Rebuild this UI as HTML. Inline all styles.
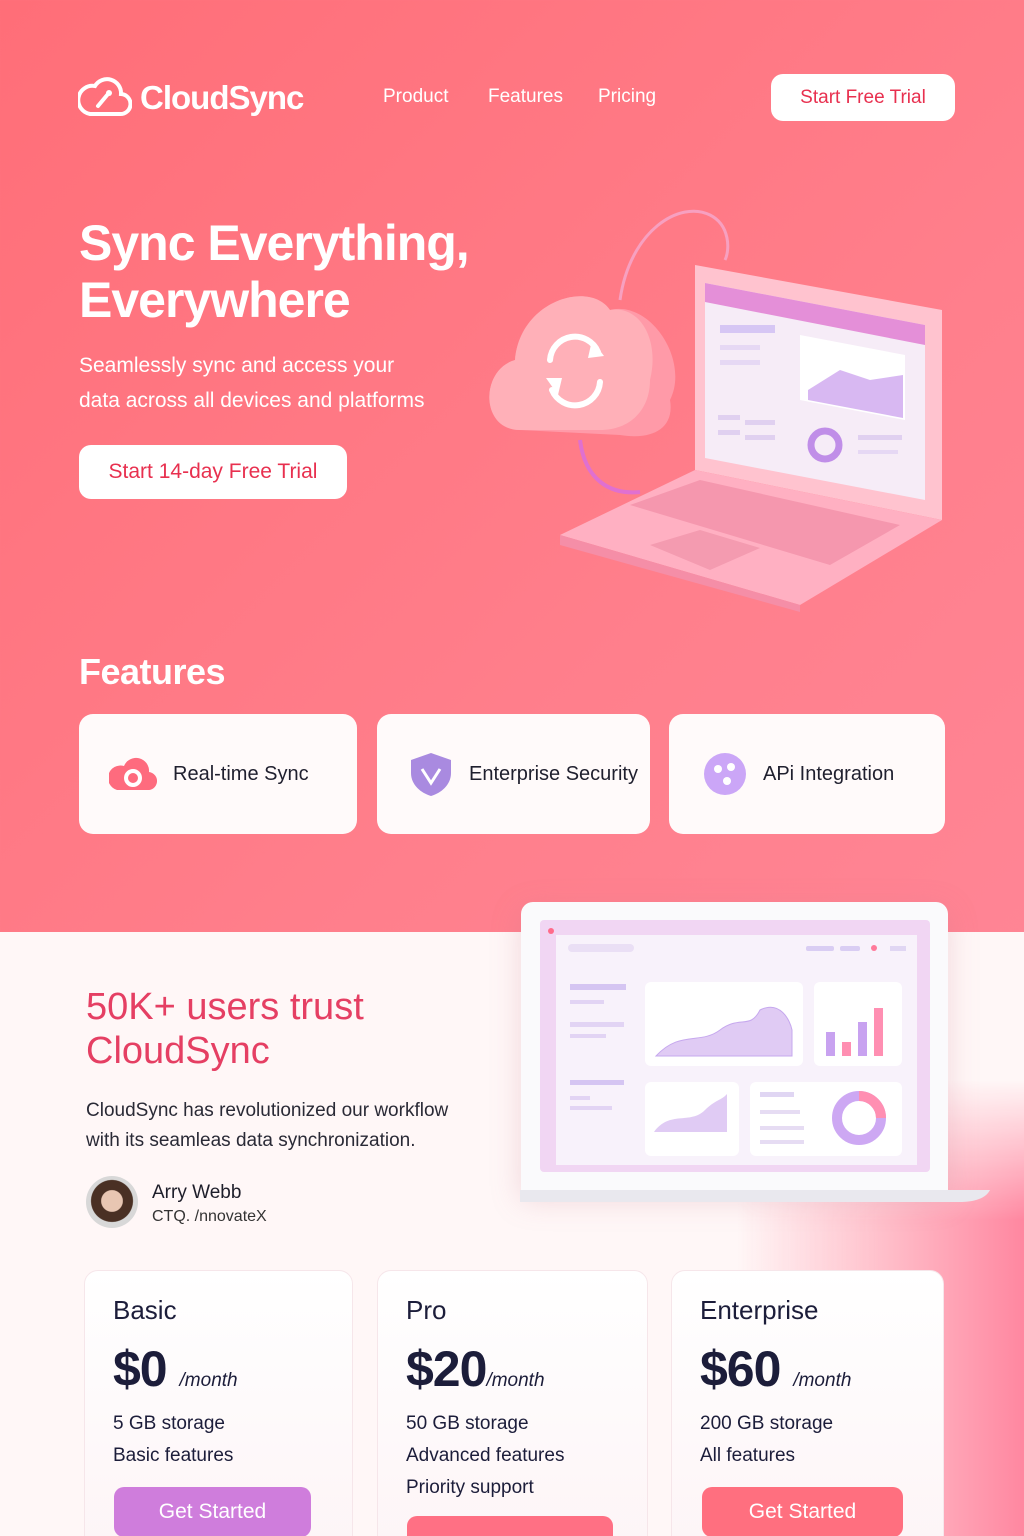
<!DOCTYPE html>
<html><head><meta charset="utf-8"><style>
*{margin:0;padding:0;box-sizing:border-box}
html{width:1024px;height:1536px;overflow:hidden}
body{width:1024px;height:1536px;overflow:hidden;font-family:"Liberation Sans",sans-serif;position:relative;background:linear-gradient(135deg,#ff6e78 0%,#ff7f8c 50%,#ff8a9c 100%)}
.abs{position:absolute}
.nav a{position:absolute;color:#fff;font-size:19px;top:86px}
.btn{position:absolute;background:#fff;border-radius:12px;color:#e8304f;text-align:center}
.card{position:absolute;background:#fffafa;border-radius:14px;top:714px;height:120px;display:flex;align-items:center;font-size:20px;color:#1f1f2e}
.pc{position:absolute;top:1270px;height:300px;background:linear-gradient(#fff,#fdf4f6);border-radius:14px;border:1px solid #f6e6ea;padding:24px 28px;color:#1c1d3a}
.pc h3{font-size:26px;font-weight:normal;margin-bottom:14px}
.pc .p{font-size:50px;font-weight:bold;letter-spacing:-1px}
.pc .p span{font-size:19px;font-weight:normal;font-style:italic;letter-spacing:0}
.pc .f{font-size:19px;line-height:32px;margin-top:10px}
.gs{position:absolute;height:50px;border-radius:10px;color:#fff;font-size:21px;text-align:center;line-height:50px}
</style></head><body>
<div class="abs" style="left:0;top:932px;width:1024px;height:604px;background:#fff7f7"></div>
<div class="abs" style="left:0;top:1080px;width:1024px;height:456px;background:linear-gradient(90deg,rgba(255,247,247,0) 72%,#ffc0cb 86%,#ff87a0 100%);-webkit-mask-image:linear-gradient(to bottom,transparent,#000 140px);mask-image:linear-gradient(to bottom,transparent,#000 140px)"></div>

<svg class="abs" style="left:78px;top:74px" width="54" height="44" viewBox="0 0 54 44"><path d="M14 40 H42 A10 10 0 0 0 43 20 A14 14 0 0 0 17 12 A11 11 0 0 0 12 40 Z" fill="none" stroke="#fff" stroke-width="4"/><path d="M20 32 L30 20" stroke="#fff" stroke-width="4" stroke-linecap="round"/><circle cx="31" cy="19" r="3" fill="#fff"/></svg>
<div class="abs" style="left:140px;top:79px;font-size:33px;color:#fff;font-weight:bold;letter-spacing:-1px">CloudSync</div>
<div class="nav"><a style="left:383px">Product</a><a style="left:488px">Features</a><a style="left:598px">Pricing</a></div>
<div class="btn" style="left:771px;top:74px;width:184px;height:47px;line-height:47px;font-size:19px">Start Free Trial</div>

<div class="abs" style="left:79px;top:215px;font-size:50px;line-height:57px;color:#fff;font-weight:bold;letter-spacing:-1px">Sync Everything,<br>Everywhere</div>
<div class="abs" style="left:79px;top:348px;font-size:21px;line-height:35px;color:#fff">Seamlessly sync and access your<br>data across all devices and platforms</div>
<div class="btn" style="left:79px;top:445px;width:268px;height:54px;line-height:54px;font-size:21px">Start 14-day Free Trial</div>

<svg class="abs" style="left:480px;top:200px" width="480" height="420" viewBox="480 200 480 420">
<path d="M620 300 C630 230 680 200 710 215 C730 225 730 250 725 260" fill="none" stroke="#f7a0c0" stroke-width="3"/>
<path d="M580 440 C585 480 610 495 640 492" fill="none" stroke="#e070d0" stroke-width="4"/>
<polygon points="695,265 942,310 942,520 695,470" fill="#ffc3cf"/>
<polygon points="705,283 925,325 925,500 705,458" fill="#f6ecf7"/>
<polygon points="705,283 925,325 925,345 705,302" fill="#e48fd8"/>
<polygon points="800,335 905,355 905,420 800,400" fill="#fff"/>
<polygon points="808,390 840,370 870,380 903,375 903,418 808,400" fill="#d8b8f2"/>
<circle cx="825" cy="445" r="14" fill="none" stroke="#c08ee8" stroke-width="7"/>
<rect x="720" y="325" width="55" height="8" fill="#d6c6f4"/>
<rect x="720" y="345" width="40" height="5" fill="#e6d8f4"/><rect x="720" y="360" width="40" height="5" fill="#e6d8f4"/>
<rect x="718" y="415" width="22" height="5" fill="#e0d0f0"/><rect x="718" y="430" width="22" height="5" fill="#e0d0f0"/><rect x="745" y="420" width="30" height="5" fill="#e0d0f0"/><rect x="745" y="435" width="30" height="5" fill="#e0d0f0"/>
<rect x="858" y="435" width="44" height="5" fill="#e0d0f0"/><rect x="858" y="450" width="40" height="4" fill="#e6d8f4"/>
<polygon points="560,535 695,470 942,520 800,605" fill="#ffb0c2"/>
<polygon points="560,535 800,605 800,612 560,545" fill="#f58ea7"/>
<polygon points="630,505 700,480 900,525 830,565" fill="#f597ae"/>
<polygon points="650,545 700,530 760,548 710,570" fill="#f49bb0"/>
<path d="M520 430 C480 430 480 370 515 360 C520 300 590 280 610 310 C650 300 690 360 670 400 C675 430 650 440 620 435 Z" fill="#ff9aa8"/>
<path d="M520 430 C480 430 480 370 515 360 C520 300 590 280 610 310 C640 305 660 340 650 380 C650 410 630 430 600 430 Z" fill="#ffb0b8"/>
<path d="M550 360 A25 25 0 0 1 598 352 M600 382 A25 25 0 0 1 552 390" fill="none" stroke="#fff" stroke-width="6" stroke-linecap="round"/>
<polygon points="592,340 604,356 588,358" fill="#fff"/><polygon points="558,395 546,378 562,378" fill="#fff"/>
</svg>

<div class="abs" style="left:79px;top:651px;font-size:36px;font-weight:bold;color:#fff;letter-spacing:-0.5px">Features</div>
<div class="card" style="left:79px;width:278px"><svg style="margin-left:30px" width="48" height="40" viewBox="0 0 48 40"><path d="M8 36 H38 A9 9 0 0 0 40 18 A13 13 0 0 0 15 12 A10 10 0 0 0 8 36Z" fill="#fe6b7e"/><circle cx="24" cy="24" r="7" fill="none" stroke="#fff" stroke-width="4"/></svg><span style="margin-left:16px">Real-time Sync</span></div>
<div class="card" style="left:377px;width:273px"><svg style="margin-left:32px" width="44" height="46" viewBox="0 0 44 46"><path d="M22 2 L42 9 V22 C42 34 32 42 22 45 C12 42 2 34 2 22 V9Z" fill="#a98ae0"/><path d="M13 18 L22 32 L31 18" fill="none" stroke="#fff" stroke-width="3"/></svg><span style="margin-left:16px">Enterprise Security</span></div>
<div class="card" style="left:669px;width:276px"><svg style="margin-left:34px" width="44" height="44" viewBox="0 0 44 44"><circle cx="22" cy="22" r="21" fill="#cba6f7"/><circle cx="15" cy="17" r="4" fill="#fff"/><circle cx="28" cy="15" r="4" fill="#fff"/><circle cx="24" cy="29" r="4" fill="#fff"/></svg><span style="margin-left:16px">APi Integration</span></div>

<div class="abs" style="left:521px;top:902px;width:427px;height:290px;background:#fafafc;border-radius:12px 12px 0 0;box-shadow:0 8px 30px rgba(200,120,140,.25)"></div>
<div class="abs" style="left:540px;top:920px;width:390px;height:252px;background:#f1d6f3;border-radius:4px"></div>
<div class="abs" style="left:556px;top:935px;width:361px;height:230px;background:#f8f2fb"></div>
<div class="abs" style="left:645px;top:982px;width:158px;height:84px;background:#fff;border-radius:6px"></div>
<div class="abs" style="left:814px;top:982px;width:88px;height:84px;background:#fff;border-radius:6px"></div>
<div class="abs" style="left:645px;top:1082px;width:94px;height:74px;background:#fff;border-radius:6px"></div>
<div class="abs" style="left:750px;top:1082px;width:152px;height:74px;background:#fff;border-radius:6px"></div>
<svg class="abs" style="left:520px;top:900px" width="480" height="310" viewBox="520 900 480 310">
<circle cx="551" cy="931" r="3" fill="#ff6b8a"/>
<rect x="568" y="944" width="66" height="8" rx="4" fill="#eadff5"/><rect x="806" y="946" width="28" height="5" rx="2" fill="#d9cdf3"/><rect x="840" y="946" width="20" height="5" rx="2" fill="#d9cdf3"/><circle cx="874" cy="948" r="3" fill="#ff7a9a"/><rect x="890" y="946" width="16" height="5" fill="#e0d6f3"/>
<rect x="570" y="984" width="56" height="6" fill="#d5c5f2"/><rect x="570" y="1000" width="34" height="4" fill="#e2d4f4"/><rect x="570" y="1022" width="54" height="5" fill="#e2d4f4"/><rect x="570" y="1034" width="36" height="4" fill="#e2d4f4"/><rect x="570" y="1080" width="54" height="5" fill="#d5c5f2"/><rect x="570" y="1096" width="20" height="4" fill="#e2d4f4"/><rect x="570" y="1106" width="42" height="4" fill="#e2d4f4"/>
<path d="M656 1056 C680 1030 700 1045 720 1030 C740 1015 750 1030 760 1010 C780 1000 790 1020 792 1030 V1056Z" fill="#e0cbf4" stroke="#c6a8ee"/>
<rect x="826" y="1032" width="9" height="24" fill="#c8a2f0"/><rect x="842" y="1042" width="9" height="14" fill="#ff8fb2"/><rect x="858" y="1022" width="9" height="34" fill="#c8a2f0"/><rect x="874" y="1008" width="9" height="48" fill="#ff8fb2"/>
<path d="M654 1132 C670 1110 690 1125 705 1110 C715 1100 722 1100 727 1094 V1132Z" fill="#e0cbf4"/>
<rect x="760" y="1092" width="34" height="5" fill="#e0d6f3"/><rect x="760" y="1110" width="40" height="4" fill="#e6dcf3"/><rect x="760" y="1126" width="44" height="4" fill="#e6dcf3"/><rect x="760" y="1140" width="44" height="4" fill="#e6dcf3"/>
<circle cx="859" cy="1118" r="22" fill="none" stroke="#cda8f3" stroke-width="10"/><path d="M859 1096 A22 22 0 0 1 881 1118" fill="none" stroke="#ff8fb2" stroke-width="10"/>
<path d="M480 1190 H990 C985 1200 970 1202 960 1202 H510 C495 1202 482 1198 480 1190Z" fill="#e9e8ee"/>
</svg>

<div class="abs" style="left:86px;top:985px;font-size:38px;line-height:44px;color:#e53f63">50K+ users trust<br>CloudSync</div>
<div class="abs" style="left:86px;top:1096px;font-size:19px;line-height:30px;color:#2a2a36">CloudSync has revolutionized our workflow<br>with its seamleas data synchronization.</div>
<div class="abs" style="left:86px;top:1176px;width:52px;height:52px;border-radius:50%;background:radial-gradient(circle at 50% 48%,#e8c6b2 0 28%,#4a3024 30% 55%,#d8d8d8 57%)"></div>
<div class="abs" style="left:152px;top:1182px;font-size:19px;color:#1e1e2a">Arry Webb</div>
<div class="abs" style="left:152px;top:1208px;font-size:16px;color:#333">CTQ. /nnovateX</div>

<div class="pc" style="left:84px;width:269px"><h3>Basic</h3><div class="p">$0 <span>/month</span></div><div class="f">5 GB storage<br>Basic features</div></div>
<div class="pc" style="left:377px;width:271px"><h3>Pro</h3><div class="p">$20<span>/month</span></div><div class="f">50 GB storage<br>Advanced features<br>Priority support</div></div>
<div class="pc" style="left:671px;width:273px"><h3>Enterprise</h3><div class="p">$60 <span>/month</span></div><div class="f">200 GB storage<br>All features</div></div>
<div class="gs" style="left:114px;top:1487px;width:197px;background:#cf7ddc">Get Started</div>
<div class="gs" style="left:407px;top:1516px;width:206px;background:#ff7084"></div>
<div class="gs" style="left:702px;top:1487px;width:201px;background:#ff6f7f">Get Started</div>
</body></html>
